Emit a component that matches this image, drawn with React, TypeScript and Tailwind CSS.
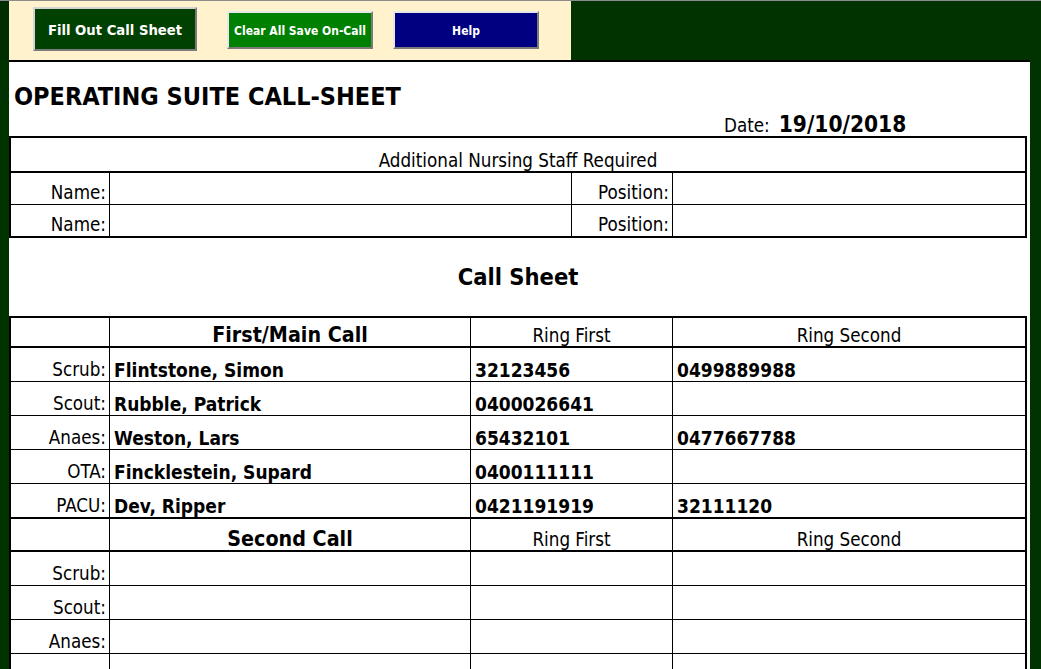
import React from "react";

const font = "font-['DejaVu_Sans_Condensed','DejaVu_Sans',sans-serif]";

type Row = [string, string, string, string];

const firstCall: Row[] = [
  ["Scrub:", "Flintstone, Simon", "32123456", "0499889988"],
  ["Scout:", "Rubble, Patrick", "0400026641", ""],
  ["Anaes:", "Weston, Lars", "65432101", "0477667788"],
  ["OTA:", "Fincklestein, Supard", "0400111111", ""],
  ["PACU:", "Dev, Ripper", "0421191919", "32111120"],
];

const secondCall: Row[] = [
  ["Scrub:", "", "", ""],
  ["Scout:", "", "", ""],
  ["Anaes:", "", "", ""],
  ["", "", "", ""],
];

function DataRow({ row, last }: { row: Row; last?: boolean }) {
  return (
    <div
      className={
        "grid grid-cols-[99px_361px_202px_1fr] " +
        (last ? "h-[35px] border-b-2 border-black" : "h-[34px] border-b border-black")
      }
    >
      <div className="flex items-end justify-end pr-[3px] pb-[1px] border-r border-black text-[18.67px] leading-none">
        {row[0]}
      </div>
      <div className="flex items-end pl-[4px] pb-[1px] border-r border-black text-[19px] font-bold leading-none">
        {row[1]}
      </div>
      <div className="flex items-end pl-[4px] pb-[1px] border-r border-black text-[19px] font-bold leading-none">
        {row[2]}
      </div>
      <div className="flex items-end pl-[4px] pb-[1px] text-[19px] font-bold leading-none">
        {row[3]}
      </div>
    </div>
  );
}

function HeaderRow({ title, h, pb }: { title: string; h: string; pb: string }) {
  return (
    <div className={"grid grid-cols-[99px_361px_202px_1fr] border-b-2 border-black " + h}>
      <div className="border-r border-black" />
      <div className={"flex items-end justify-center border-r border-black text-[21.3px] font-bold leading-none " + pb}>
        {title}
      </div>
      <div className="flex items-end justify-center border-r border-black text-[18.67px] leading-none">
        Ring First
      </div>
      <div className="flex items-end justify-center text-[18.67px] leading-none">
        Ring Second
      </div>
    </div>
  );
}

export default function App() {
  return (
    <div className={"w-[1041px] h-[669px] overflow-hidden bg-[#003300] text-black font-stretch-condensed " + font}>
      <div className="h-px bg-[#8c8c8c]" />
      <div className="flex h-[59px]">
        <div className="w-[9px] bg-[#002e00]" />
        <div className="w-[562px] bg-[#fff2cc] flex items-start pl-[24px]">
          <div className="mt-[6px] w-[164px] h-[44px] pt-[2px] bg-[#004000] border-2 border-t-[#d4d4d4] border-l-[#d4d4d4] border-r-[#7a7a7a] border-b-[#7a7a7a] flex items-center justify-center text-white font-bold text-[14.7px]">
            Fill Out Call Sheet
          </div>
          <div className="ml-[30px] mt-[10px] w-[146px] h-[38px] pt-[1px] bg-[#008000] border-2 border-t-[#e8e8e8] border-l-[#e8e8e8] border-r-[#7a7a7a] border-b-[#7a7a7a] flex items-center justify-center text-white font-bold text-[12px]">
            Clear All Save On-Call
          </div>
          <div className="ml-[20px] mt-[10px] w-[146px] h-[38px] pt-[1px] bg-[#000080] border-2 border-t-[#e8e8e8] border-l-[#e8e8e8] border-r-[#7a7a7a] border-b-[#7a7a7a] flex items-center justify-center text-white font-bold text-[12px]">
            Help
          </div>
        </div>
      </div>
      <div className="ml-[9px] w-[1021px] h-[620px] bg-white border-t-2 border-black">
        <div className="mt-[22px] pl-[5px] h-[25px] text-[25px] font-bold leading-none">
          OPERATING SUITE CALL-SHEET
        </div>
        <div className="mt-[4px] h-[23px] ml-[715px] flex items-baseline leading-none">
          <span className="text-[18.67px]">Date:</span>
          <span className="ml-[9px] text-[22.5px] font-bold">19/10/2018</span>
        </div>
        <div className="w-[1018px] border-2 border-black">
          <div className="h-[35px] border-b-2 border-black flex items-end justify-center text-[18.67px] leading-none">
            Additional Nursing Staff Required
          </div>
          {[0, 1].map((i) => (
            <div
              key={i}
              className={
                "grid grid-cols-[99px_462px_101px_1fr] " +
                (i === 0 ? "h-[32px] border-b border-black" : "h-[31px]")
              }
            >
              <div className="flex items-end justify-end pr-[3px] pb-[1px] border-r border-black text-[18.67px] leading-none">
                Name:
              </div>
              <div className="border-r border-black" />
              <div className="flex items-end justify-end pr-[3px] pb-[1px] border-r border-black text-[18.67px] leading-none">
                Position:
              </div>
              <div />
            </div>
          ))}
        </div>
        <div className="mt-[28px] h-[24px] w-[1018px] text-center text-[23.5px] font-bold leading-none">
          Call Sheet
        </div>
        <div className="mt-[26px] w-[1018px] border-t-2 border-l-2 border-r-2 border-black">
          <HeaderRow title="First/Main Call" h="h-[30px]" pb="pb-[1px]" />
          {firstCall.map((r, i) => (
            <DataRow key={i} row={r} last={i === firstCall.length - 1} />
          ))}
          <HeaderRow title="Second Call" h="h-[33px]" pb="pb-[1px]" />
          {secondCall.map((r, i) => (
            <DataRow key={i} row={r} />
          ))}
        </div>
      </div>
    </div>
  );
}
